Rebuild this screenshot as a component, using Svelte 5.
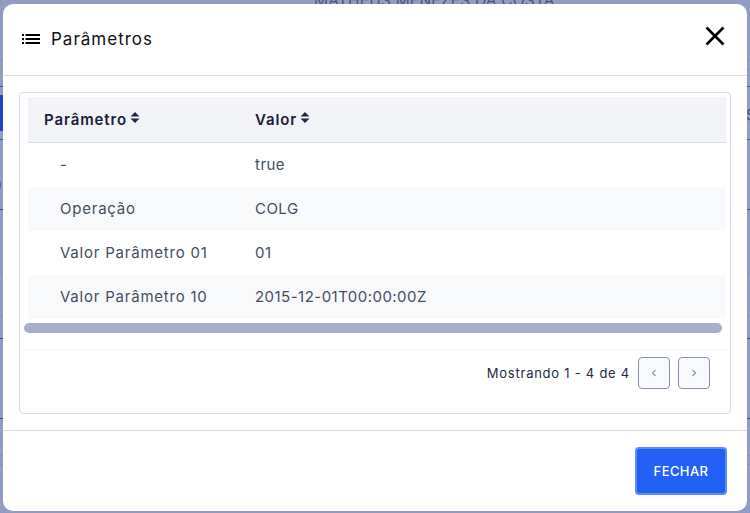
<script>
  const rows = [
    { name: '-', value: 'true' },
    { name: 'Operação', value: 'COLG' },
    { name: 'Valor Parâmetro 01', value: '01' },
    { name: 'Valor Parâmetro 10', value: '2015-12-01T00:00:00Z' }
  ];

  // lines of the page under the backdrop, they only show at the window edges
  const lines = [
    { y: 60, color: '#8490bb' },
    { y: 69, color: '#8490bb' },
    { y: 86, color: '#2f55cf' },
    { y: 139, color: '#2f55cf' },
    { y: 209, color: '#3f4a7d' },
    { y: 273, color: '#8490bb' },
    { y: 315, color: '#8490bb' },
    { y: 338, color: '#3f4a7d' },
    { y: 418, color: '#3f4a7d' },
    { y: 455, color: '#8490bb' },
    { y: 464, color: '#8490bb' }
  ];
</script>

<div class="page">
  <div class="behind">
    <span class="name-behind">MATHEUS MENEZES DA COSTA</span>
    {#each lines as line}
      <div class="line" style="top: {line.y}px; background-color: {line.color};"></div>
    {/each}
    <div class="blue-cell"></div>
    <span class="edge-left">)</span>
    <span class="edge-right">S</span>
  </div>

  <div class="modal">
    <header>
      <div class="title">
        <svg width="18" height="18" viewBox="0 0 18 18" fill="#000">
          <rect x="0" y="4" width="2" height="2" />
          <rect x="3.500" y="4" width="14.500" height="2" />
          <rect x="0" y="8" width="2" height="2" />
          <rect x="3.500" y="8" width="14.500" height="2" />
          <rect x="0" y="12" width="2" height="2" />
          <rect x="3.500" y="12" width="14.500" height="2" />
        </svg>
        <h2>Parâmetros</h2>
      </div>
      <svg class="close" width="20" height="20" viewBox="0 0 20 20">
        <path d="M1.500 1.500 18.500 18.500M18.500 1.500 1.500 18.500" stroke="#000" stroke-width="2.600" fill="none" />
      </svg>
    </header>

    <div class="body">
      <div class="card">
        <div class="table">
          <div class="row head">
            <div class="col-a">
              Parâmetro
              <svg width="10" height="14" viewBox="0 0 10 14"><path d="M5 1 9.500 5.500H.5ZM.5 7.500H9.500L5 12Z" fill="#222b45" /></svg>
            </div>
            <div class="col-b">
              Valor
              <svg width="10" height="14" viewBox="0 0 10 14"><path d="M5 1 9.500 5.500H.5ZM.5 7.500H9.500L5 12Z" fill="#222b45" /></svg>
            </div>
          </div>
          {#each rows as row, i}
            <div class="row" class:odd={i % 2 == 1}>
              <div class="col-a name">{row.name}</div>
              <div class="col-b">{row.value}</div>
            </div>
          {/each}
        </div>
        <div class="scrollbar"></div>
        <div class="pager">
          <span>Mostrando 1 - 4 de 4</span>
          <button aria-label="Anterior">
            <svg width="8" height="10" viewBox="0 0 8 10"><path d="M5.500 2 2.500 5 5.500 8" stroke="#8f9bb3" stroke-width="1.300" fill="none" /></svg>
          </button>
          <button aria-label="Próximo">
            <svg width="8" height="10" viewBox="0 0 8 10"><path d="M2.500 2 5.500 5 2.500 8" stroke="#8f9bb3" stroke-width="1.300" fill="none" /></svg>
          </button>
        </div>
      </div>
    </div>

    <footer>
      <button class="primary">FECHAR</button>
    </footer>
  </div>
</div>

<style>
  :global(body) {
    margin: 0;
  }

  .page {
    position: relative;
    width: 750px;
    height: 513px;
    overflow: hidden;
    background-color: #919cc3;
    font-family: Inter, "Liberation Sans", sans-serif;
    color: #222b45;
  }

  .behind {
    position: absolute;
    inset: 0;
  }

  .name-behind {
    position: absolute;
    top: -9px;
    left: 314px;
    font-size: 15.500px;
    line-height: 20px;
    letter-spacing: 0.2px;
    white-space: nowrap;
    color: #4a5480;
  }

  .line {
    position: absolute;
    left: 0;
    right: 0;
    height: 1px;
  }

  .blue-cell {
    position: absolute;
    top: 95px;
    left: 0;
    width: 3px;
    height: 36px;
    background-color: #2145c5;
  }

  .edge-left {
    position: absolute;
    top: 175px;
    left: -3px;
    font-size: 14px;
    color: #3f4a7d;
  }

  .edge-right {
    position: absolute;
    top: 106px;
    left: 746px;
    font-size: 14px;
    color: #3f4a7d;
  }

  .modal {
    position: absolute;
    top: 4px;
    left: 3px;
    width: 744px;
    height: 507px;
    box-sizing: border-box;
    display: flex;
    flex-direction: column;
    background-color: #ffffff;
    border-radius: 10px;
  }

  header {
    height: 72px;
    box-sizing: border-box;
    display: flex;
    align-items: center;
    justify-content: space-between;
    padding: 0 22px 0 19px;
    border-bottom: 1px solid #d8dcee;
  }

  .title {
    display: flex;
    align-items: center;
    gap: 11px;
    margin-top: -2px;
  }

  h2 {
    margin: 0;
    font-size: 17px;
    font-weight: 400;
    letter-spacing: 1px;
    color: #111111;
  }

  .close {
    margin-top: -8px;
  }

  .body {
    flex: 1;
    padding: 16px;
  }

  .card {
    height: 322px;
    box-sizing: border-box;
    padding: 4px 3px 0 4px;
    border: 1px solid #d8dcee;
    border-radius: 4px;
  }

  .table {
    margin: 0 1px 0 4px;
    font-size: 15px;
  }

  .row {
    display: flex;
    align-items: center;
    height: 44px;
    padding-bottom: 2px;
    box-sizing: border-box;
    color: #454e5e;
  }

  .row.odd {
    background-color: #f8f9fb;
  }

  .row.head {
    height: 46px;
    padding-bottom: 0;
    font-weight: 600;
    letter-spacing: 0.9px;
    color: #1a2138;
    background-color: #f3f4f8;
    border-bottom: 1px solid #d8dcee;
  }

  .col-a {
    width: 227px;
    box-sizing: border-box;
    padding-left: 16px;
    display: flex;
    align-items: center;
    gap: 3px;
  }

  .col-a.name {
    padding-left: 32px;
    letter-spacing: 0.78px;
  }

  .col-b {
    display: flex;
    align-items: center;
    gap: 3px;
    letter-spacing: 0.47px;
  }

  .head .col-b {
    letter-spacing: 0.9px;
  }

  .head svg {
    margin-top: -4px;
  }

  .scrollbar {
    height: 10px;
    margin-top: 4px;
    width: 698px;
    background-color: #a8afcd;
    border-radius: 5px;
  }

  .pager {
    margin-top: 16px;
    padding: 7px 17px 0 0;
    display: flex;
    justify-content: flex-end;
    align-items: center;
    gap: 8px;
    border-top: 1px solid #f3f4f8;
    font-size: 13px;
    letter-spacing: 0.75px;
    color: #222b45;
  }

  .pager button {
    width: 32px;
    height: 32px;
    padding: 0;
    display: flex;
    align-items: center;
    justify-content: center;
    background-color: #f7f9fc;
    border: 1px solid #8a91ad;
    border-radius: 4px;
  }

  footer {
    display: flex;
    justify-content: flex-end;
    align-items: flex-end;
    padding: 0 20px 16px 0;
    height: 81px;
    box-sizing: border-box;
    border-top: 1px solid #d8dcee;
  }

  .primary {
    width: 92px;
    height: 48px;
    background-color: #2360f5;
    border: 2px solid #5b8cf8;
    border-radius: 4px;
    color: #ffffff;
    font-family: inherit;
    font-size: 13px;
    font-weight: 500;
    letter-spacing: 0.4px;
  }
</style>
